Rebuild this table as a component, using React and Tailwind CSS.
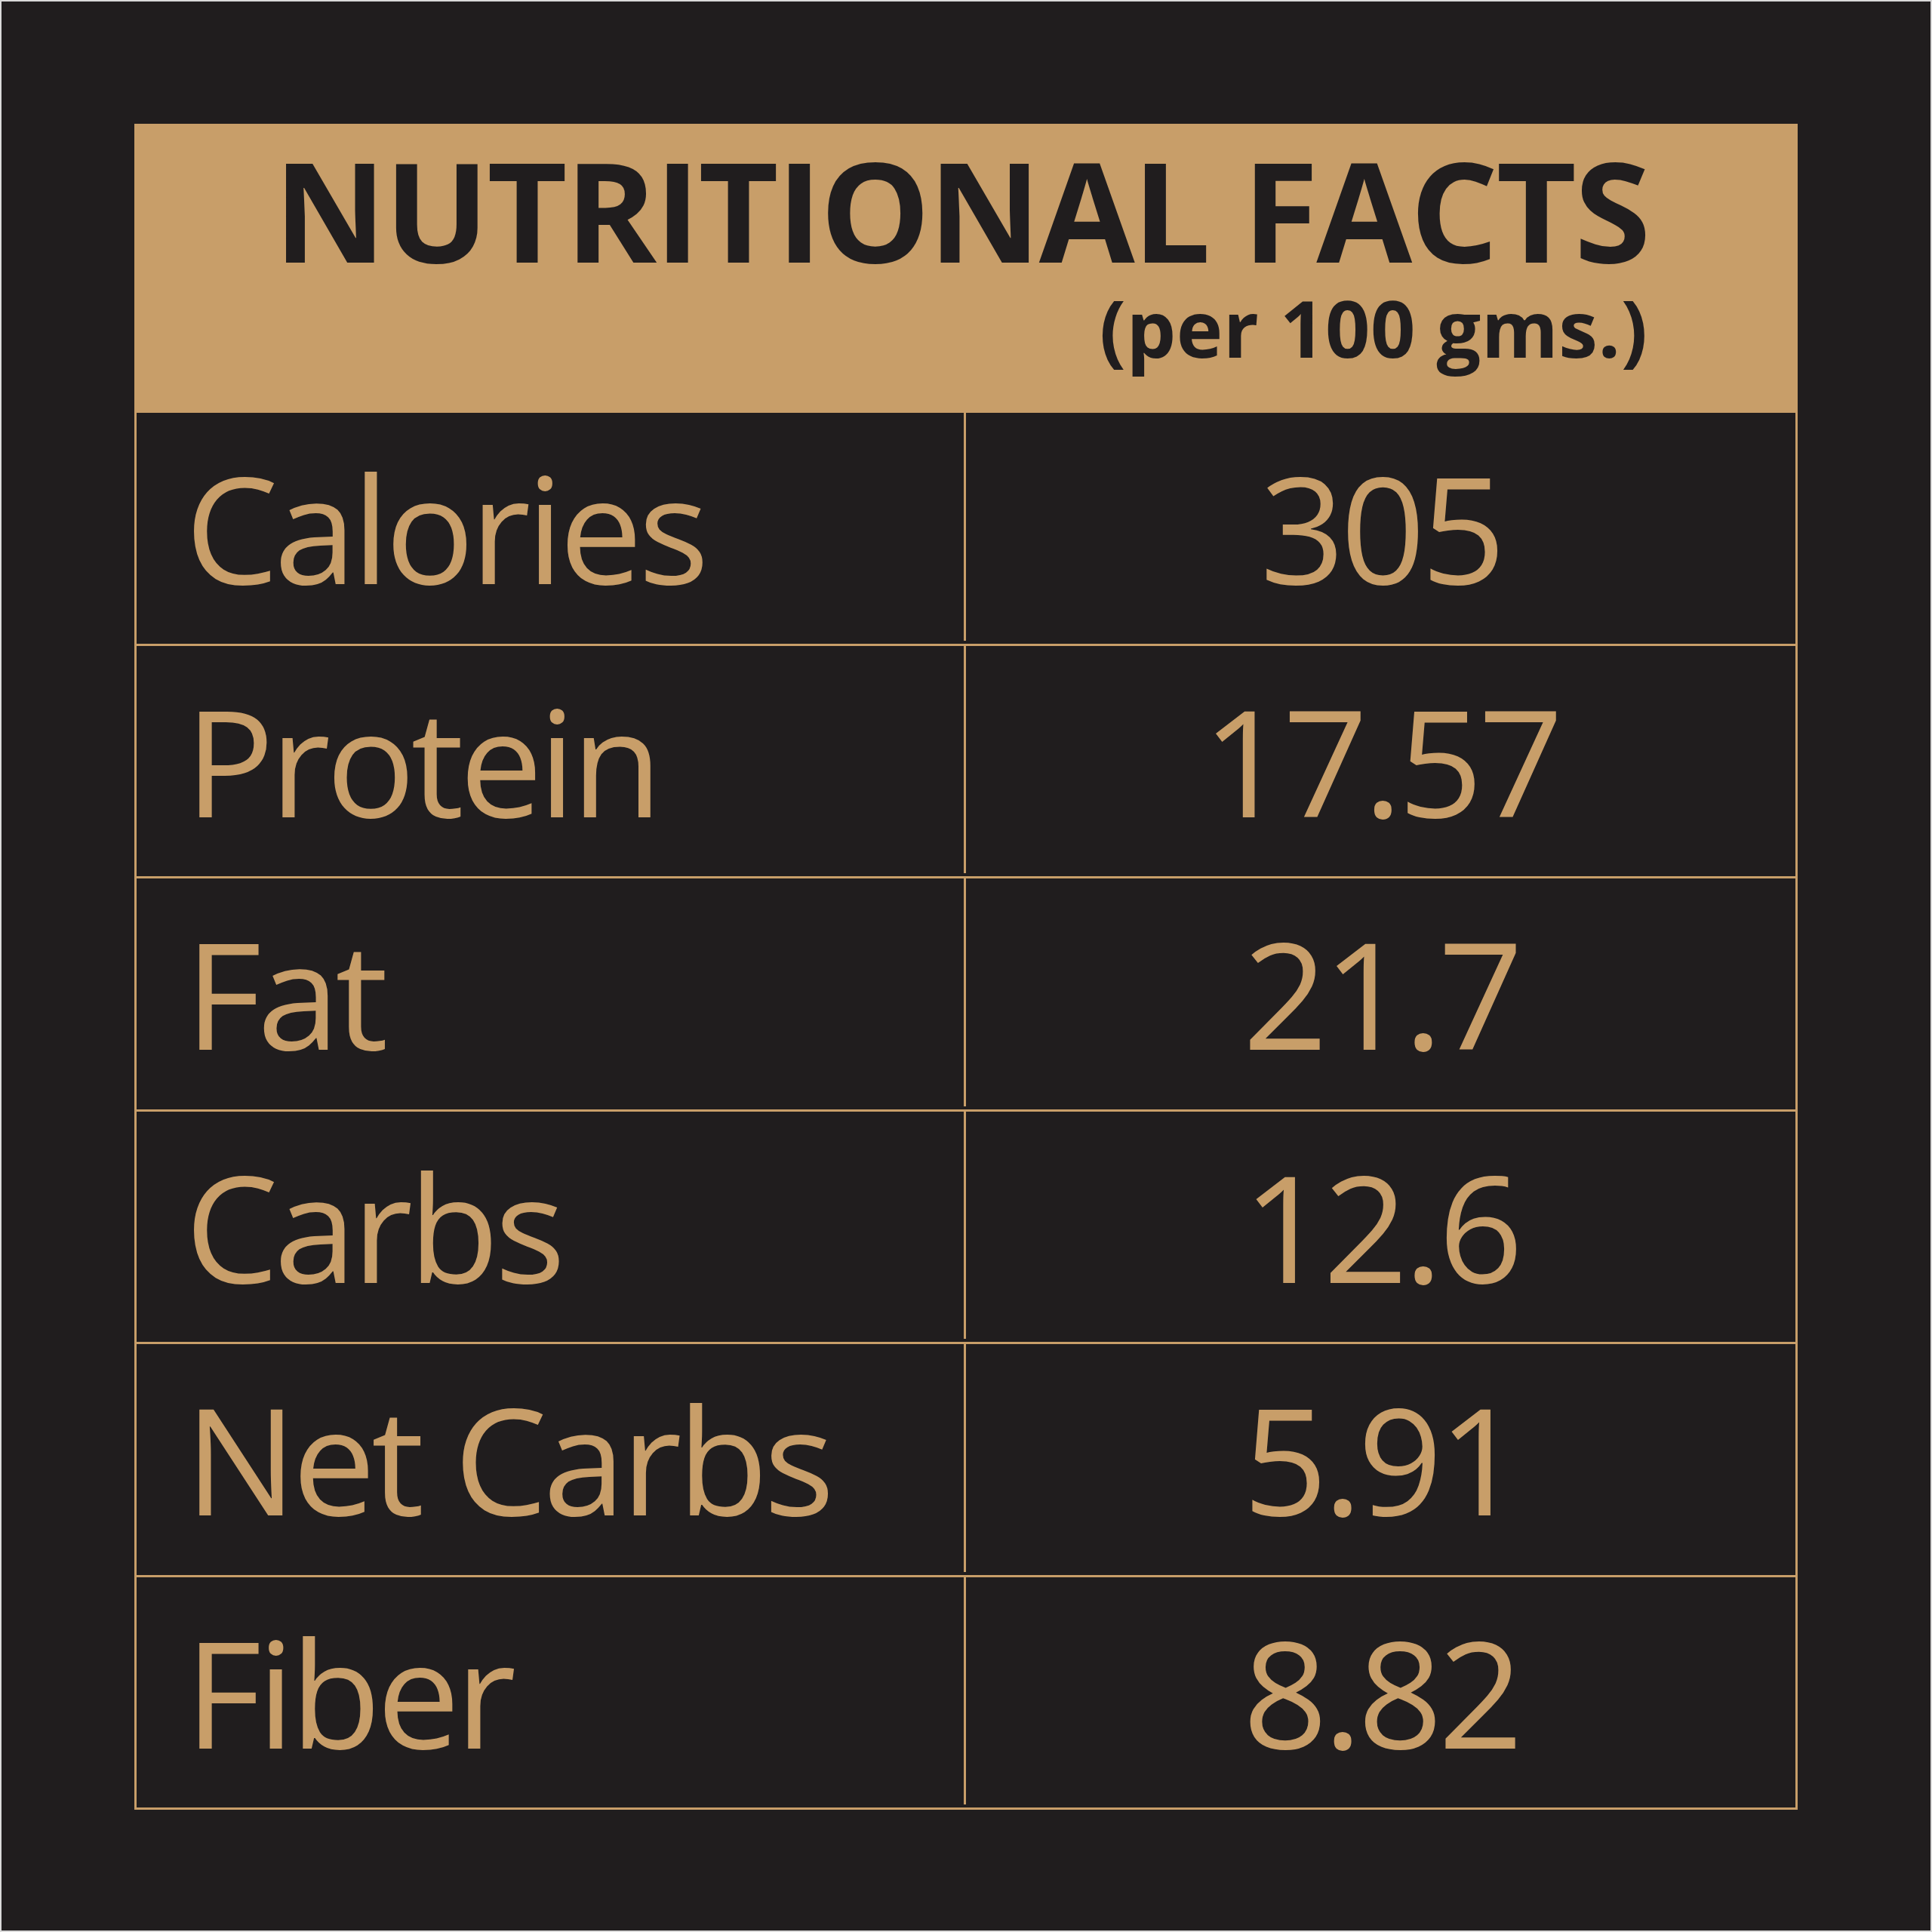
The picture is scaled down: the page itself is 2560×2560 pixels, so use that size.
import React from 'react';

const rows = [
  { label: 'Calories', value: '305' },
  { label: 'Protein', value: '17.57' },
  { label: 'Fat', value: '21.7' },
  { label: 'Carbs', value: '12.6' },
  { label: 'Net Carbs', value: '5.91' },
  { label: 'Fiber', value: '8.82' },
];

const App = () => {
  return (
    <div className="w-[2560px] h-[2560px] bg-[#201d1e] border-2 border-[#d9d9d9] pt-[162px] px-[176px] font-['Open_Sans',sans-serif]">
      <div className="border-[3px] border-[#c89e69]">
        <div className="h-[377px] bg-[#c89e69] flex justify-center pt-[10px] pr-[13px]">
          <div className="flex flex-col items-end text-[#201d1e] font-bold">
            <h1 className="text-[184px] leading-[200px] tracking-[-3px]">NUTRITIONAL FACTS</h1>
            <p className="text-[104px] leading-[110px] mt-[2px] mr-[1px] tracking-[0.5px]">(per 100 gms.)</p>
          </div>
        </div>
        {rows.map((row) => (
          <div key={row.label} className="grid grid-cols-2 h-[308.5px] border-t-[3px] border-[#c89e69] text-[#c89e69] text-[197px] pb-[4px]">
            <div className="flex items-center pl-[64px] border-r-[3px] border-[#c89e69] tracking-[-6px]">
              {row.label}
            </div>
            <div className="flex items-center justify-center tracking-[-6px]">
              {row.value}
            </div>
          </div>
        ))}
      </div>
    </div>
  );
};

export default App;
